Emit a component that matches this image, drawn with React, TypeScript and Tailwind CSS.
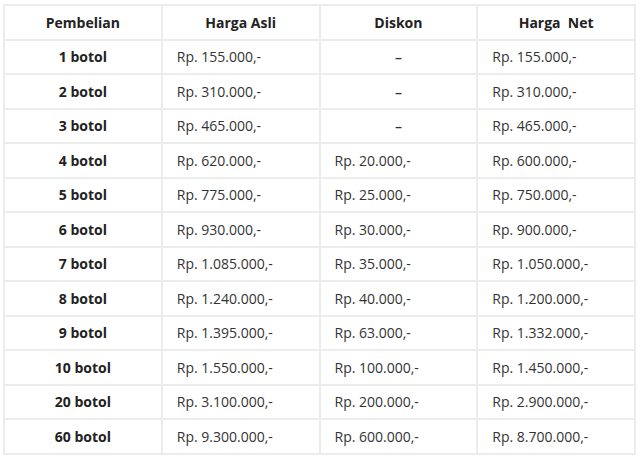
const rows: [string, string, string, string][] = [
  ["1 botol", "Rp. 155.000,-", "–", "Rp. 155.000,-"],
  ["2 botol", "Rp. 310.000,-", "–", "Rp. 310.000,-"],
  ["3 botol", "Rp. 465.000,-", "–", "Rp. 465.000,-"],
  ["4 botol", "Rp. 620.000,-", "Rp. 20.000,-", "Rp. 600.000,-"],
  ["5 botol", "Rp. 775.000,-", "Rp. 25.000,-", "Rp. 750.000,-"],
  ["6 botol", "Rp. 930.000,-", "Rp. 30.000,-", "Rp. 900.000,-"],
  ["7 botol", "Rp. 1.085.000,-", "Rp. 35.000,-", "Rp. 1.050.000,-"],
  ["8 botol", "Rp. 1.240.000,-", "Rp. 40.000,-", "Rp. 1.200.000,-"],
  ["9 botol", "Rp. 1.395.000,-", "Rp. 63.000,-", "Rp. 1.332.000,-"],
  ["10 botol", "Rp. 1.550.000,-", "Rp. 100.000,-", "Rp. 1.450.000,-"],
  ["20 botol", "Rp. 3.100.000,-", "Rp. 200.000,-", "Rp. 2.900.000,-"],
  ["60 botol", "Rp. 9.300.000,-", "Rp. 600.000,-", "Rp. 8.700.000,-"],
];

const cell = "border-2 border-[#ececec] h-[34.5px] p-0";

export default function App() {
  return (
    <div className="w-[640px] h-[463px] bg-white pt-[4px] pl-[3px] font-['Open_Sans',sans-serif] text-[14px] text-[#333]">
      <table className="w-[633px] border-collapse table-fixed">
        <thead>
          <tr className="font-bold text-[#222]">
            <th className={cell + " text-center"}>Pembelian</th>
            <th className={cell + " text-center"}>Harga Asli</th>
            <th className={cell + " text-center"}>Diskon</th>
            <th className={cell + " text-center"}>Harga&nbsp; Net</th>
          </tr>
        </thead>
        <tbody>
          {rows.map(([qty, asli, diskon, net]) => (
            <tr key={qty}>
              <td className={cell + " text-center font-bold text-[#222]"}>{qty}</td>
              <td className={cell + " pl-[14px]"}>{asli}</td>
              <td className={cell + (diskon === "–" ? " text-center font-semibold" : " pl-[14px]")}>{diskon}</td>
              <td className={cell + " pl-[14px]"}>{net}</td>
            </tr>
          ))}
        </tbody>
      </table>
    </div>
  );
}
